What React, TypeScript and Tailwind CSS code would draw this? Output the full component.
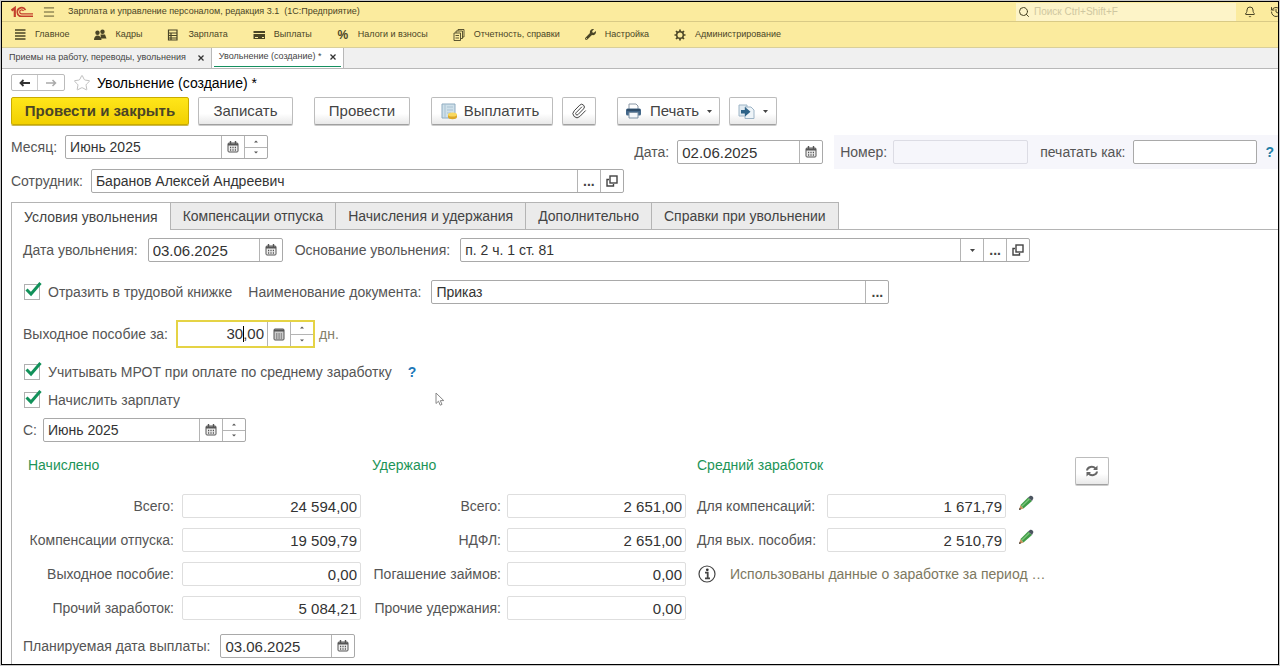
import React from "react";
import { Menu, Search, Bell, History, Star, Paperclip } from "lucide-react";
import { FaWrench } from "react-icons/fa";

const INPUT = "min-w-0 bg-transparent px-1 text-[#333] outline-none";
const LABEL = "shrink-0 whitespace-nowrap text-sm text-[#555]";
const CELL = "flex h-full w-[23px] shrink-0 items-center justify-center border-l border-[#b4b4b4] text-[#444]";
const BTN = "flex h-7 items-center justify-center rounded-xs border border-[#bcbcbc] border-b-[#a0a0a0] bg-linear-to-b from-white from-60% to-[#e9e9e9] text-[15px] text-[#444] shadow-[0_1px_0_#ccc]";

function CalendarIcon() {
  return (
    <svg width="12" height="12" viewBox="0 0 12 12" fill="none" stroke="#555">
      <rect x="1" y="2" width="10" height="9" rx="1" fill="#eee" />
      <path d="M1 3.5h10" strokeWidth="2" />
      <path d="M3.5 0v3M8.5 0v3" strokeWidth="1.4" />
      <path d="M3 6.5h1.2M5.4 6.5h1.2M7.8 6.5h1.2M3 9h1.2M5.4 9h1.2M7.8 9h1.2" strokeWidth="1.5" />
    </svg>
  );
}

function CalculatorIcon() {
  return (
    <svg width="12" height="13" viewBox="0 0 12 13" fill="none" stroke="#555">
      <rect x="1" y="1" width="10" height="11" rx="1" fill="#ccc" />
      <path d="M1 2.5h10" strokeWidth="2" />
      <path d="M3 6h6M3 8h6M3 10h6" strokeDasharray="1.4 1" strokeWidth="1.2" />
    </svg>
  );
}

function OpenIcon() {
  return (
    <svg width="12" height="12" viewBox="0 0 12 12" fill="none" stroke="#444" strokeWidth="1.4">
      <rect x="4" y="1" width="7" height="7" />
      <path d="M3 4.500H1V11h6.500V9" />
    </svg>
  );
}

function Spinner() {
  return (
    <span className={CELL + " flex-col"}>
      <button type="button" aria-label="Увеличить" className="flex w-full flex-1 items-center justify-center border-b border-[#b4b4b4]">
        <svg width="4" height="3" viewBox="0 0 4 3"><path d="M0 2.500L2 .500l2 2z" fill="#555" /></svg>
      </button>
      <button type="button" aria-label="Уменьшить" className="flex w-full flex-1 items-center justify-center">
        <svg width="4" height="3" viewBox="0 0 4 3"><path d="M0 .500l2 2 2-2z" fill="#555" /></svg>
      </button>
    </span>
  );
}

function Caret() {
  return <svg width="5" height="3" viewBox="0 0 5 3"><path d="M0 0h5L2.500 3z" fill="#444" /></svg>;
}

type Part = "calendar" | "calculator" | "spin" | "drop" | "dots" | "open";

const partNames: Record<Part, string> = {
  calendar: "Календарь",
  calculator: "Калькулятор",
  spin: "Изменить значение",
  drop: "Список",
  dots: "Выбрать",
  open: "Открыть",
};

function Field({ id, label, value, width, parts = [], gap = "gap-2", size = "text-sm" }: { id: string; label: string; value: string; width: string; parts?: Part[]; gap?: string; size?: string }) {
  return (
    <div className={`flex items-center ${gap}`}>
      <label htmlFor={id} className={LABEL}>{label}</label>
      <div className={`flex h-6 min-w-0 items-center rounded-xs border border-[#a9a9a9] bg-white ${width}`}>
        <input id={id} defaultValue={value} className={`${INPUT} ${size} h-full w-full flex-1`} />
        {parts.map((p) =>
          p === "spin" ? <Spinner key={p} /> : (
            <button key={p} type="button" aria-label={partNames[p]} className={CELL}>
              {p === "calendar" && <CalendarIcon />}
              {p === "drop" && <Caret />}
              {p === "open" && <OpenIcon />}
              {p === "dots" && <span className="text-sm font-bold leading-none">...</span>}
            </button>
          )
        )}
      </div>
    </div>
  );
}

function Check({ id, label }: { id: string; label: string }) {
  return (
    <div className="flex h-5 items-center gap-2">
      <span className="relative ml-px flex size-4 shrink-0">
        <input id={id} type="checkbox" defaultChecked className="peer size-4 appearance-none border border-[#b0b0b0] bg-white" />
        <svg className="pointer-events-none invisible absolute -top-1 left-0 peer-checked:visible" width="19" height="19" viewBox="0 0 19 19" fill="none">
          <path d="M2.500 9.500L7 14 16.500 3" stroke="#12915a" strokeWidth="3" />
        </svg>
      </span>
      <label htmlFor={id} className={LABEL}>{label}</label>
    </div>
  );
}

function Total({ id, label, value }: { id: string; label: string; value: string }) {
  return (
    <>
      <label htmlFor={id} className={LABEL + " text-right"}>{label}</label>
      <input id={id} readOnly defaultValue={value} className="h-6 w-[179px] rounded-xs border border-[#dedede] bg-white px-[3px] text-right text-[15px] text-[#333] outline-none" />
    </>
  );
}

function Pencil() {
  return (
    <svg width="16" height="16" viewBox="0 0 16 16">
      <path d="M1 15l1.500-5L5.500 13.500z" fill="#c9905a" />
      <path d="M1 15l.7-2.200 1.400 1.400z" fill="#333" />
      <path d="M2.500 10L10 2.500l4 3.500-8.500 7.500z" fill="#3f9b46" />
      <path d="M3.800 11.200L11.300 4" stroke="#7cc47a" strokeWidth="1.400" />
      <path d="M10 2.500L12.300.8c1.500-.5 3.700 1.200 2.900 3L14 6z" fill="#4c5560" />
    </svg>
  );
}

const ic = { width: 14, height: 14, viewBox: "0 0 14 14", fill: "none", stroke: "#4a4526" };

const sections = [
  { name: "Главное", icon: <svg {...ic}><path d="M2 2h10.500M2 5h10.500M2 8h10.500M2 11h10.500" strokeWidth="1.600" /></svg> },
  { name: "Кадры", icon: <svg {...ic} stroke="none" fill="#4a4526"><circle cx="9.500" cy="3.800" r="2.200" /><path d="M7.500 6.500h4.500l1.500 4H8z" /><circle cx="4.500" cy="4.800" r="2.200" /><path d="M1 12c0-3 1.500-4.500 3.500-4.500S8.500 9 8.500 12z" /></svg> },
  { name: "Зарплата", icon: <svg {...ic}><path d="M2.500 2h8.500v10H2.500zM2.500 5h8.500M2.500 7.500h8.500M2.500 10h8.500M5 5v7" strokeWidth="1.200" /></svg> },
  { name: "Выплаты", icon: <svg {...ic} stroke="none" fill="#4a4526"><path d="M1.500 3H13v2H1.500zM1.500 6H13v5H1.500z" /><path d="M3 9.500h3M10 9.500h2" stroke="#fbeb9e" /></svg> },
  { name: "Налоги и взносы", icon: <span className="w-3.5 text-center text-xs font-bold leading-none">%</span> },
  { name: "Отчетность, справки", icon: <svg {...ic} strokeWidth="0.900"><path d="M2 5h6.500v7.500H2zM4 5V3h6.500v7.500h-2M6 3V1.500h6V9h-1.500M3.500 7.500h3.500M3.500 10h3.500" /></svg> },
  { name: "Настройка", icon: <FaWrench size={11} className="mx-px" /> },
  { name: "Администрирование", icon: <svg {...ic}><circle cx="7" cy="7" r="3.300" strokeWidth="1.500" /><path d="M7 1.500v2M7 10.500v2M1.500 7h2M10.500 7h2M3 3l1.400 1.400M9.600 9.600L11 11M11 3L9.600 4.400M4.400 9.600L3 11" strokeWidth="1.700" /></svg> },
];

const tabs = ["Условия увольнения", "Компенсации отпуска", "Начисления и удержания", "Дополнительно", "Справки при увольнении"];

function CloseIcon() {
  return <svg width="6" height="6" viewBox="0 0 6 6" stroke="#333" strokeWidth="1.300"><path d="M.500.500l5 5M5.500.500l-5 5" /></svg>;
}

export default function App() {
  return (
    <div className="min-h-screen bg-[#c8c8c8] p-px font-['Liberation_Sans',Arial,sans-serif]">
      <div className="flex min-h-[calc(100vh-2px)] flex-col overflow-hidden border border-black bg-white">
        <header className="bg-[#fbeb9e] text-[#4a4526]">
          <div className="flex h-5 items-center border-b border-[#d9ca86] pl-2">
            <svg width="24" height="12" viewBox="0 0 24 12" fill="none" stroke="#c4402c">
              <path d="M1.500 4.500L4.800 2V11" strokeWidth="2.200" />
              <path d="M15.500 4.200A4.300 4.300 0 1 0 11.500 10.300H23" strokeWidth="1.600" />
              <path d="M13.500 5A2 2 0 1 0 11.800 7.900H23" strokeWidth="1.300" />
            </svg>
            <button type="button" aria-label="Меню" className="ml-2"><Menu size={14} strokeWidth={1.5} /></button>
            <span className="ml-3 text-[9px]">Зарплата и управление персоналом, редакция 3.1&nbsp; (1С:Предприятие)</span>
            <label className="ml-auto flex h-[18px] w-[220px] items-center gap-1 bg-[#fdf4c8] pl-0.5">
              <Search size={12} className="shrink-0" />
              <input aria-label="Поиск" placeholder="Поиск Ctrl+Shift+F" className="w-full min-w-0 bg-transparent text-[10px] outline-none placeholder:text-[#cfc7a0]" />
            </label>
            <button type="button" aria-label="Уведомления" className="ml-2"><Bell size={12} /></button>
            <button type="button" aria-label="История" className="-mr-1 ml-3.5"><History size={12} /></button>
          </div>
          <nav className="flex h-[26px] items-center gap-6 border-b border-[#d9cf9a] pl-[11px]">
            {sections.map((s) => (
              <a key={s.name} href="#" className="flex items-center gap-2 whitespace-nowrap text-[9px]">{s.icon}{s.name}</a>
            ))}
          </nav>
        </header>

        <div className="flex h-[21px] items-stretch border-b border-[#b8b8b8] bg-[#f0f0f0] text-[9px] text-[#444]">
          <div className="flex items-center gap-3 border-r border-[#b8b8b8] px-[7px]">
            <a href="#">Приемы на работу, переводы, увольнения</a>
            <button type="button" aria-label="Закрыть"><CloseIcon /></button>
          </div>
          <div className="flex items-stretch border-r border-[#b8b8b8] bg-white px-0.5">
            <div className="mb-px flex items-center gap-2 border-b border-[#159060] px-[5px]">
              <a href="#">Увольнение (создание) *</a>
              <button type="button" aria-label="Закрыть"><CloseIcon /></button>
            </div>
          </div>
        </div>

        <main className="flex flex-1 flex-col pl-[9px]">
          <div className="mt-[5px] flex h-[17px] items-center">
            <div className="flex h-[17px] rounded-xs border border-[#bbb]">
              <button type="button" aria-label="Назад" className="flex w-[26px] items-center justify-center border-r border-[#ccc]">
                <svg width="11" height="8" viewBox="0 0 11 8" fill="none" stroke="#333" strokeWidth="1.800"><path d="M11 4H2M4.500 1L1.500 4l3 3" /></svg>
              </button>
              <button type="button" aria-label="Вперед" className="flex w-[26px] items-center justify-center">
                <svg width="11" height="8" viewBox="0 0 11 8" fill="none" stroke="#aaa" strokeWidth="1.500"><path d="M0 4h9M6.500 1l3 3-3 3" /></svg>
              </button>
            </div>
            <Star size={18} strokeWidth={1} className="ml-2 text-[#aaa]" />
            <h1 className="ml-1.5 text-sm text-black">Увольнение (создание) *</h1>
          </div>

          <div className="mt-1.5 flex">
            <button type="button" className="flex h-7 w-[178px] items-center justify-center rounded-xs border border-[#c9ab00] bg-linear-to-b from-[#ffe619] to-[#f2d000] text-[15px] font-bold text-[#4a4526] shadow-[0_1px_0_#c9b850]">Провести и закрыть</button>
            <button type="button" className={BTN + " ml-[9px] w-[95px]"}>Записать</button>
            <button type="button" className={BTN + " ml-[21px] w-[96px]"}>Провести</button>
            <button type="button" className={BTN + " ml-[21px] w-[122px] gap-1.5 pr-1"}>
              <svg width="17" height="17" viewBox="0 0 17 17"><path d="M1 1h13v14H1z" fill="#cfe0ea" stroke="#8eabc0" /><path d="M4 1v14M6 4h6M6 7h6M6 10h4" stroke="#a9c2d2" /><path d="M7 11.500v2.500c0 3 9 3 9 0v-2.500z" fill="#dca828" /><ellipse cx="11.500" cy="11.500" rx="4.500" ry="2" fill="#f8d860" /></svg>
              Выплатить
            </button>
            <button type="button" aria-label="Файлы" className={BTN + " ml-[9px] w-[34px]"}><Paperclip size={16} strokeWidth={1.5} /></button>
            <button type="button" className={BTN + " ml-[21px] w-[103px] gap-2"}>
              <svg width="17" height="16" viewBox="0 0 17 16"><path d="M4 1h7l2 2v4H4z" fill="#fff" stroke="#8b98a6" /><rect x="1" y="5.500" width="15" height="7" rx="1.500" fill="#44688a" /><path d="M2 6h13v2H2z" fill="#2f4d69" /><path d="M4 9.500h9v5.500H4z" fill="#f4f7fa" stroke="#7c91a4" /></svg>
              Печать <Caret />
            </button>
            <button type="button" aria-label="Создать на основании" className={BTN + " ml-[9px] w-[48px] gap-2"}>
              <svg width="17" height="15" viewBox="0 0 17 15"><path d="M1 1h8v11H1z" fill="#e0eaf1" stroke="#9db4c6" /><path d="M7 3h6l3 3v8.500H7z" fill="#eef4f8" stroke="#9db4c6" /><path d="M3 6h4V3l5.500 4.700L7 12.500V9.500H3z" fill="#2e6388" /></svg>
              <Caret />
            </button>
          </div>

          <div className="mt-2.5 flex h-[34px] items-start">
            <Field id="month" label="Месяц:" value="Июнь 2025" width="w-[203px]" parts={["calendar", "spin"]} />
            <div className="ml-auto flex h-[34px] items-center">
              <Field id="date" label="Дата:" value="02.06.2025" width="w-[146px]" size="text-[15px]" parts={["calendar"]} />
              <div className="ml-[11px] flex h-full items-center bg-[#f6f6fb] pr-1 pl-1.5">
                <label htmlFor="number" className={LABEL}>Номер:</label>
                <input id="number" className="ml-1.5 h-6 w-[135px] rounded-xs border border-[#dcdce4] bg-transparent px-1 text-sm" />
                <label htmlFor="printas" className={LABEL + " ml-3"}>печатать как:</label>
                <input id="printas" className="ml-2 h-6 w-[124px] rounded-xs border border-[#a9a9a9] bg-white px-1 text-sm" />
                <button type="button" aria-label="Справка" className="ml-2 text-sm font-bold text-[#1d7fa8]">?</button>
              </div>
            </div>
          </div>
          <Field id="employee" label="Сотрудник:" value="Баранов Алексей Андреевич" width="w-[533px]" parts={["dots", "open"]} />

          <div role="tablist" className="mt-[9px] flex h-7">
            {tabs.map((t, i) => (
              <button key={t} type="button" role="tab" aria-selected={i === 0} className={i === 0 ? "border-t border-l border-[#b4b4b4] bg-white px-3 text-sm text-[#444]" : "border-y border-l border-[#b4b4b4] bg-[#ebebeb] px-3 text-sm text-[#444]"}>{t}</button>
            ))}
            <span className="flex-1 border-b border-l border-[#b4b4b4]" />
          </div>

          <section className="flex flex-1 flex-col border-l border-[#b4b4b4] pt-2 pl-[11px]">
            <div className="flex gap-3">
              <Field id="fire" label="Дата увольнения:" value="03.06.2025" width="w-[135px]" gap="gap-2.5" size="text-[15px]" parts={["calendar"]} />
              <Field id="reason" label="Основание увольнения:" value="п. 2 ч. 1 ст. 81" width="w-[570px]" gap="gap-2.5" parts={["drop", "dots", "open"]} />
            </div>
            <div className="mt-[18px] flex items-center gap-4">
              <Check id="book" label="Отразить в трудовой книжке" />
              <Field id="doc" label="Наименование документа:" value="Приказ" width="w-[458px]" gap="gap-2.5" parts={["dots"]} />
            </div>
            <div className="mt-4 flex h-7 items-center">
              <label htmlFor="days" className={LABEL}>Выходное пособие за:</label>
              <div className="ml-2 flex h-7 w-[139px] items-center border-2 border-[#e5d345] bg-white">
                <div className="relative flex h-6 min-w-0 flex-1">
                  <input id="days" defaultValue="30,00" className="w-full min-w-0 px-[3px] text-right text-[15px] text-[#333] outline-none" />
                  <span className="absolute top-1 right-[23px] h-4 w-px bg-black" />
                </div>
                <button type="button" aria-label="Калькулятор" className={CELL}><CalculatorIcon /></button>
                <Spinner />
              </div>
              <span className="ml-1 text-sm text-[#85806a]">дн.</span>
            </div>
            <div className="relative mt-3.5 flex h-5 items-center gap-4">
              <Check id="mrot" label="Учитывать МРОТ при оплате по среднему заработку" />
              <button type="button" aria-label="Справка" className="text-sm font-bold text-[#1d78b8]">?</button>
              <svg className="absolute top-[30px] left-[412px]" width="10" height="14" viewBox="0 0 10 14"><path d="M1 1v10.500l2.500-2.300 1.700 4 1.800-.8-1.700-3.800h3.500z" fill="#fff" stroke="#888" /></svg>
            </div>
            <div className="mt-2"><Check id="accrue" label="Начислить зарплату" /></div>
            <div className="mt-2"><Field id="from" label="С:" value="Июнь 2025" width="w-[203px]" gap="gap-1.5" parts={["calendar", "spin"]} /></div>

            <div className="mt-[13px] ml-[5px] flex items-start">
              <div>
                <h2 className="h-[39px] text-sm text-[#1c9457]">Начислено</h2>
                <div className="grid grid-cols-[146px_179px] items-center gap-x-2 gap-y-2.5">
                  <Total id="a1" label="Всего:" value="24 594,00" />
                  <Total id="a2" label="Компенсации отпуска:" value="19 509,79" />
                  <Total id="a3" label="Выходное пособие:" value="0,00" />
                  <Total id="a4" label="Прочий заработок:" value="5 084,21" />
                </div>
              </div>
              <div className="ml-[11px]">
                <h2 className="h-[39px] text-sm text-[#1c9457]">Удержано</h2>
                <div className="grid grid-cols-[129px_179px] items-center gap-x-1.5 gap-y-2.5">
                  <Total id="b1" label="Всего:" value="2 651,00" />
                  <Total id="b2" label="НДФЛ:" value="2 651,00" />
                  <Total id="b3" label="Погашение займов:" value="0,00" />
                  <Total id="b4" label="Прочие удержания:" value="0,00" />
                </div>
              </div>
              <div className="ml-[11px] w-[412px]">
                <div className="flex h-[39px] items-start justify-between">
                  <h2 className="text-sm text-[#1c9457]">Средний заработок</h2>
                  <button type="button" aria-label="Обновить" className={BTN + " mt-0.5 w-[34px]"}>
                    <svg width="14" height="12" viewBox="0 0 14 12" fill="none" stroke="#666" strokeWidth="2"><path d="M2 5.500C2.500 1.500 8 .8 10.500 3.500M12 6.500C11.500 10.500 6 11.200 3.500 8.500" /><path d="M12.500.500v4.500H8zM1.500 11.500V7H6z" fill="#666" stroke="none" /></svg>
                  </button>
                </div>
                <div className="grid grid-cols-[124px_179px_22px] items-center gap-x-1.5 gap-y-2.5 [&>label]:text-left">
                  <Total id="c1" label="Для компенсаций:" value="1 671,79" />
                  <button type="button" aria-label="Изменить" className="pb-1.5 pl-1.5"><Pencil /></button>
                  <Total id="c2" label="Для вых. пособия:" value="2 510,79" />
                  <button type="button" aria-label="Изменить" className="pb-1.5 pl-1.5"><Pencil /></button>
                </div>
                <div className="mt-2.5 flex h-6 items-center text-sm text-[#7d7860]">
                  <svg width="20" height="20" viewBox="0 0 20 20" fill="none" stroke="#444"><circle cx="10" cy="10" r="8" strokeWidth="1.200" /><circle cx="10.300" cy="5.800" r="1.400" fill="#333" stroke="none" /><path d="M8 8.700h2.700v5.300M8 14.300h5" strokeWidth="1.800" /></svg>
                  <span className="ml-[13px] whitespace-nowrap">Использованы данные о заработке за период …</span>
                </div>
              </div>
            </div>
            <div className="mt-3.5 pb-1"><Field id="pay" label="Планируемая дата выплаты:" value="03.06.2025" width="w-[135px]" gap="gap-2.5" size="text-[15px]" parts={["calendar"]} /></div>
          </section>
        </main>
      </div>
    </div>
  );
}
